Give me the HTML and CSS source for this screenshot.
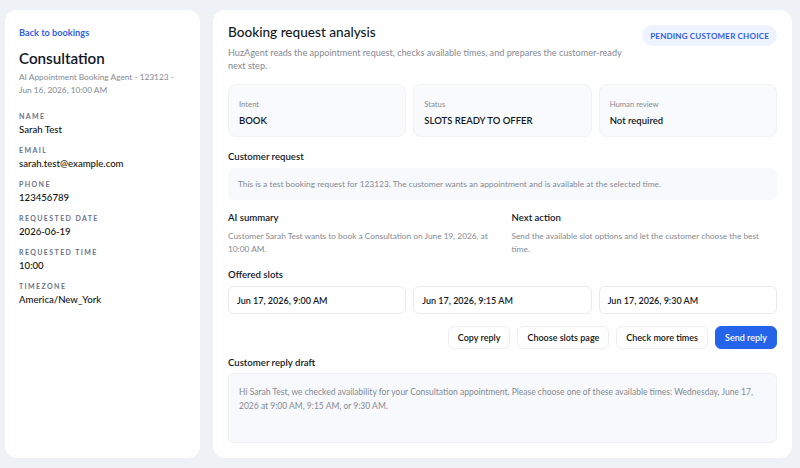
FILE: index.html
```html
<!DOCTYPE html>
<html>
<head>
<meta charset="utf-8">
<link rel="stylesheet" href="styles.css">
</head>
<body>
<div class="page">
  <aside class="side">
    <a class="back">Back to bookings</a>
    <h1 class="side-title">Consultation</h1>
    <p class="side-sub">AI Appointment Booking Agent - 123123 - Jun 16, 2026, 10:00 AM</p>
    <dl class="fields">
      <div class="field"><dt>Name</dt><dd>Sarah Test</dd></div>
      <div class="field"><dt>Email</dt><dd>sarah.test@example.com</dd></div>
      <div class="field"><dt>Phone</dt><dd>123456789</dd></div>
      <div class="field"><dt>Requested date</dt><dd>2026-06-19</dd></div>
      <div class="field"><dt>Requested time</dt><dd>10:00</dd></div>
      <div class="field"><dt>Timezone</dt><dd>America/New_York</dd></div>
    </dl>
  </aside>
  <main class="main">
    <div class="head">
      <div class="head-text">
        <h2 class="title">Booking request analysis</h2>
        <p class="muted lead">HuzAgent reads the appointment request, checks available times, and prepares the customer-ready next step.</p>
      </div>
      <span class="badge">Pending customer choice</span>
    </div>
    <div class="grid3 stats">
      <div class="stat"><div class="stat-label">Intent</div><div class="stat-value">BOOK</div></div>
      <div class="stat"><div class="stat-label">Status</div><div class="stat-value">SLOTS READY TO OFFER</div></div>
      <div class="stat"><div class="stat-label">Human review</div><div class="stat-value">Not required</div></div>
    </div>
    <h3 class="label">Customer request</h3>
    <div class="box request">This is a test booking request for 123123. The customer wants an appointment and is available at the selected time.</div>
    <div class="two">
      <div>
        <h3 class="label">AI summary</h3>
        <p class="muted">Customer Sarah Test wants to book a Consultation on June 19, 2026, at 10:00 AM.</p>
      </div>
      <div>
        <h3 class="label">Next action</h3>
        <p class="muted">Send the available slot options and let the customer choose the best time.</p>
      </div>
    </div>
    <h3 class="label">Offered slots</h3>
    <div class="grid3 slots">
      <div class="slot">Jun 17, 2026, 9:00 AM</div>
      <div class="slot">Jun 17, 2026, 9:15 AM</div>
      <div class="slot">Jun 17, 2026, 9:30 AM</div>
    </div>
    <div class="actions">
      <button class="btn">Copy reply</button>
      <button class="btn">Choose slots page</button>
      <button class="btn">Check more times</button>
      <button class="btn primary">Send reply</button>
    </div>
    <h3 class="label">Customer reply draft</h3>
    <div class="box draft">Hi Sarah Test, we checked availability for your Consultation appointment. Please choose one of these available times: Wednesday, June 17, 2026 at 9:00 AM, 9:15 AM, or 9:30 AM.</div>
  </main>
</div>
</body>
</html>
```
FILE: styles.css
```css
* { box-sizing: border-box; margin: 0; padding: 0; }
html, body { height: 100%; }
body {
  background: #eef2f7;
  font-family: Lato, "Noto Sans", sans-serif;
  color: #111827;
}
.page {
  display: flex;
  gap: 13px;
  padding: 10px 8px 10px 5px;
  height: 468px;
}
.side {
  width: 195px;
  flex: none;
  background: #fff;
  border-radius: 12px;
  padding: 17px 14px;
}
.back {
  display: block;
  color: #2f5ee8;
  font-size: 9.2px;
  font-weight: 700;
  line-height: 12px;
}
.side-title {
  font-size: 15.2px;
  font-weight: 600;
  margin-top: 9px;
  line-height: 20px;
}
.side-sub {
  margin-top: 2.5px;
  font-size: 8.3px;
  line-height: 13px;
  color: #858a94;
}
.fields { margin-top: 14.5px; display: flex; flex-direction: column; gap: 9.5px; }
.field dt {
  font-size: 7px;
  font-weight: 700;
  letter-spacing: 1.4px;
  text-transform: uppercase;
  color: #6b7388;
  line-height: 10px;
}
.field dd {
  margin-top: 1.5px;
  font-size: 9.6px;
  font-weight: 500;
  line-height: 13px;
  color: #111;
}
.main {
  flex: 1;
  background: #fff;
  border-radius: 12px;
  padding: 12px 15px 15px;
  display: flex;
  flex-direction: column;
}
.head { display: flex; justify-content: space-between; align-items: flex-start; gap: 12px; }
.title { font-size: 13.6px; font-weight: 500; line-height: 20px; }
.lead { margin-top: 3.5px; font-size: 9.1px; }
.muted { font-size: 8.3px; line-height: 13px; color: #858a94; }
.lead.muted { font-size: 9.1px; }
.badge {
  flex: none;
  margin-top: 3px;
  height: 21px;
  display: inline-flex;
  align-items: center;
  background: #eef3ff;
  color: #2f5ee8;
  font-size: 8px;
  font-weight: 700;
  letter-spacing: 0.2px;
  text-transform: uppercase;
  padding: 0 8px;
  border-radius: 11px;
}
.grid3 { display: grid; grid-template-columns: repeat(3, 1fr); gap: 7px; }
.stats { margin-top: 12.5px; }
.stat {
  background: #f8fafc;
  border: 1px solid #f0f2f6;
  border-radius: 8px;
  padding: 14px 10px 10px;
  height: 53px;
}
.stat-label { font-size: 7.7px; color: #858a94; line-height: 10px; }
.stat-value { margin-top: 6px; font-size: 9.5px; font-weight: 600; line-height: 12px; }
.label { font-size: 9.6px; font-weight: 600; line-height: 13px; margin-top: 12.5px; }
.box {
  background: #f7f9fc;
  border-radius: 6px;
  font-size: 8.4px;
  line-height: 14px;
  color: #858a94;
}
.request { margin-top: 5.5px; padding: 9px 10px; height: 32px; }
.two { display: grid; grid-template-columns: 1fr 1fr; gap: 14px; }
.two > div + div { padding-left: 2px; }
.two .label { margin-top: 10.5px; }
.two .muted { margin-top: 6px; }
.two + .label { margin-top: 12px; }
.slots { margin-top: 5.5px; }
.slot {
  border: 1px solid #e8ebf0;
  border-radius: 6px;
  height: 28px;
  display: flex;
  align-items: center;
  padding: 0 8px;
  font-size: 9px;
  font-weight: 600;
}
.actions { display: flex; justify-content: flex-end; gap: 7px; margin-top: 12px; }
.btn {
  font-family: inherit;
  background: #fff;
  border: 1px solid #eceef2;
  border-radius: 6px;
  height: 23px;
  padding: 0 9px;
  font-size: 9px;
  font-weight: 600;
  color: #111;
}
.btn.primary { background: #2563eb; border-color: #2563eb; color: #fff; }
.actions + .label { margin-top: 6.5px; }
.draft {
  margin-top: 4.5px;
  padding: 11px 10px;
  height: 70px;
  border: 1px solid #eef0f4;
  font-size: 8.5px;
}
```
